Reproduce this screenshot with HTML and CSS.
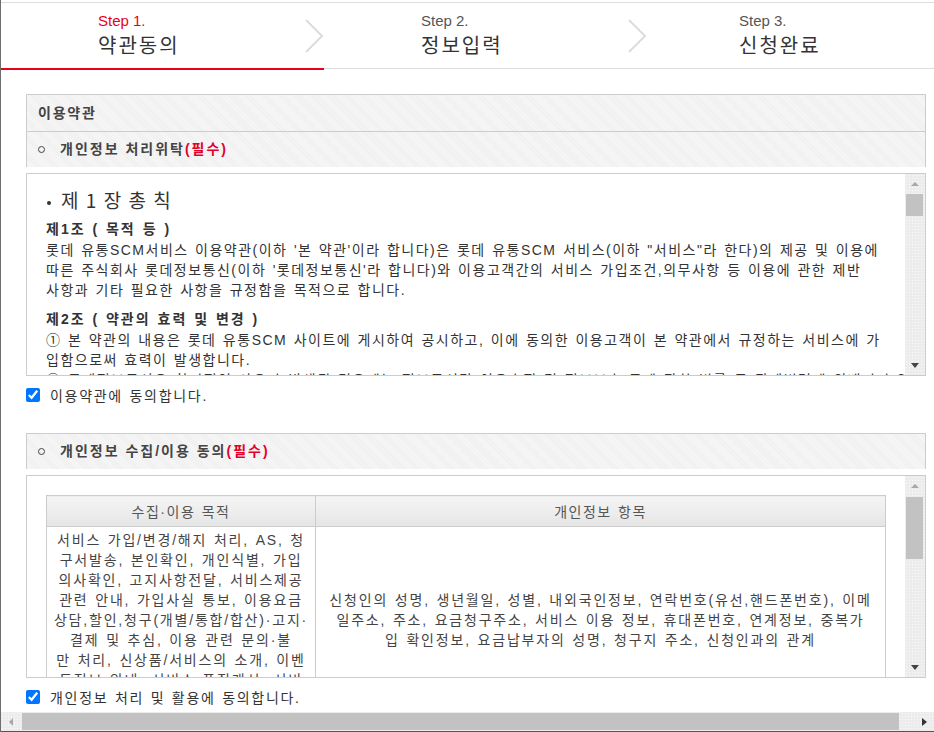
FILE: index.html
```html
<!DOCTYPE html>
<html lang="ko">
<head>
    <meta charset="UTF-8">
    <meta name="viewport" content="width=device-width, initial-scale=1.0">
    <title>약관동의</title>
    <link rel="stylesheet" href="styles.css">
</head>
<body>
    <div class="frame">
        <div class="page">
            <ul class="steps">
                <li class="step on">
                    <div class="step-text">
                        <span class="step-no">Step 1.</span>
                        <strong>약관동의</strong>
                    </div>
                    <svg class="step-arrow" width="18" height="34" viewBox="0 0 18 34"><polyline points="1,1 17,17 1,33" /></svg>
                </li>
                <li class="step">
                    <div class="step-text">
                        <span class="step-no">Step 2.</span>
                        <strong>정보입력</strong>
                    </div>
                    <svg class="step-arrow" width="18" height="34" viewBox="0 0 18 34"><polyline points="1,1 17,17 1,33" /></svg>
                </li>
                <li class="step">
                    <div class="step-text">
                        <span class="step-no">Step 3.</span>
                        <strong>신청완료</strong>
                    </div>
                </li>
            </ul>

            <div class="content">
                <div class="sec-head">
                    <h2 class="sec-title">이용약관</h2>
                    <h3 class="sec-sub"><span class="ring"></span>개인정보 처리위탁<em>(필수)</em></h3>
                </div>
                <div class="box">
                    <div class="box-body terms">
                        <h4 class="chapter"><span class="dot"></span>제 1 장 총 칙</h4>
                        <dl class="article">
                            <dt>제1조 ( 목적 등 )</dt>
                            <dd>롯데 유통SCM서비스 이용약관(이하 '본 약관'이라 합니다)은 롯데 유통SCM 서비스(이하 "서비스"라 한다)의 제공 및 이용에<br>따른 주식회사 롯데정보통신(이하 '롯데정보통신'라 합니다)와 이용고객간의 서비스 가입조건,의무사항 등 이용에 관한 제반<br>사항과 기타 필요한 사항을 규정함을 목적으로 합니다.</dd>
                        </dl>
                        <dl class="article">
                            <dt>제2조 ( 약관의 효력 및 변경 )</dt>
                            <dd>① 본 약관의 내용은 롯데 유통SCM 사이트에 게시하여 공시하고, 이에 동의한 이용고객이 본 약관에서 규정하는 서비스에 가<br>입함으로써 효력이 발생합니다.</dd>
                            <dd>② 롯데정보통신은 합리적인 사유가 발생될 경우에는 정보통신망 이용촉진 및 정보보호 등에 관한 법률 등 관계법령에 위배되지 않는</dd>
                        </dl>
                    </div>
                    <div class="vscroll">
                        <span class="sb-up"></span>
                        <span class="sb-thumb"></span>
                        <span class="sb-track"></span>
                        <span class="sb-down"></span>
                    </div>
                </div>
                <label class="agree"><input type="checkbox" checked>이용약관에 동의합니다.</label>

                <div class="sec-head sec-gap">
                    <h3 class="sec-sub"><span class="ring"></span>개인정보 수집/이용 동의<em>(필수)</em></h3>
                </div>
                <div class="box">
                    <div class="box-body consent">
                        <table class="info-table">
                            <colgroup>
                                <col class="col-purpose">
                                <col>
                            </colgroup>
                            <thead>
                                <tr>
                                    <th>수집·이용 목적</th>
                                    <th>개인정보 항목</th>
                                </tr>
                            </thead>
                            <tbody>
                                <tr>
                                    <td>서비스 가입/변경/해지 처리, AS, 청<br>구서발송, 본인확인, 개인식별, 가입<br>의사확인, 고지사항전달, 서비스제공<br>관련 안내, 가입사실 통보, 이용요금<br>상담,할인,청구(개별/통합/합산)·고지·<br>결제 및 추심, 이용 관련 문의·불<br>만 처리, 신상품/서비스의 소개, 이벤<br>트정보 안내, 서비스 품질개선, 서비<br>스 이용실적 분석 및 통계 활용</td>
                                    <td>신청인의 성명, 생년월일, 성별, 내외국인정보, 연락번호(유선,핸드폰번호), 이메<br>일주소, 주소, 요금청구주소, 서비스 이용 정보, 휴대폰번호, 연계정보, 중복가<br>입 확인정보, 요금납부자의 성명, 청구지 주소, 신청인과의 관계</td>
                                </tr>
                            </tbody>
                        </table>
                    </div>
                    <div class="vscroll">
                        <span class="sb-up"></span>
                        <span class="sb-thumb tall"></span>
                        <span class="sb-track"></span>
                        <span class="sb-down"></span>
                    </div>
                </div>
                <label class="agree"><input type="checkbox" checked>개인정보 처리 및 활용에 동의합니다.</label>
            </div>
        </div>

        <div class="hscroll">
            <span class="sb-left"></span>
            <span class="sb-thumb-h"></span>
            <span class="sb-track"></span>
            <span class="sb-right"></span>
        </div>
    </div>
</body>
</html>
```

FILE: styles.css
```css
* {
    margin: 0;
    padding: 0;
    box-sizing: border-box;
}

body {
    font-family: "Liberation Sans", "Noto Sans CJK KR", sans-serif;
    font-size: 14px;
    color: #333;
    background-color: #fff;
}

.frame {
    height: 732px;
    border-left: 1px solid #6e6e6e;
    display: flex;
    flex-direction: column;
    overflow: hidden;
}

.page {
    flex: 1;
    overflow: hidden;
    padding-top: 2px;
}

/* steps */
.steps {
    display: flex;
    width: 969px;
    list-style: none;
    border-top: 1px solid #ddd;
    border-bottom: 1px solid #ddd;
}

.step {
    width: 323px;
    height: 65px;
    display: flex;
    align-items: center;
    justify-content: space-between;
    padding-left: 97px;
}

.step:last-child {
    padding-left: 92px;
}

.step.on {
    box-shadow: 0 2px 0 #e8001c;
}

.step-text {
    display: flex;
    flex-direction: column;
}

.step-no {
    font-size: 15px;
    line-height: 18px;
    color: #555;
}

.step.on .step-no {
    color: #e8001c;
}

.step-text strong {
    font-family: "Noto Sans CJK KR", sans-serif;
    font-size: 20px;
    line-height: 30px;
    font-weight: normal;
    letter-spacing: 2px;
    color: #333;
}

.step-arrow {
    margin-right: 1px;
}

.step-arrow polyline {
    fill: none;
    stroke: #dcdcdc;
    stroke-width: 2;
}

/* sections */
.content {
    width: 900px;
    margin-left: 25px;
    padding-top: 25px;
}

.sec-head {
    border: 1px solid #ccc;
    border-bottom: none;
    background: repeating-linear-gradient(45deg, #f7f7f7 0 1px, #efefef 1px 2px);
}

.sec-gap {
    margin-top: 30px;
}

.sec-title {
    height: 37px;
    line-height: 36px;
    padding-left: 11px;
    border-bottom: 1px solid #ccc;
    font-size: 14px;
    letter-spacing: 1.8px;
    color: #444;
}

.sec-sub {
    height: 35px;
    line-height: 35px;
    padding-left: 11px;
    font-size: 14px;
    letter-spacing: 2px;
    color: #444;
}

.sec-sub em {
    font-style: normal;
    color: #e4002b;
}

.ring {
    display: inline-block;
    width: 7px;
    height: 7px;
    margin-right: 15px;
    border: 1.5px solid #444;
    border-radius: 50%;
    vertical-align: 1px;
}

.box {
    height: 203px;
    margin-top: 6px;
    border: 1px solid #ccc;
    display: flex;
}

.box-body {
    flex: 1;
    overflow: hidden;
    padding: 12px 19px 0;
    letter-spacing: 1.5px;
    word-spacing: 1px;
}

/* terms text */
.chapter {
    font-family: "Noto Sans CJK KR", sans-serif;
    font-size: 19px;
    line-height: 28px;
    font-weight: normal;
    letter-spacing: 0.5px;
    margin-bottom: 4px;
}

.dot {
    display: inline-block;
    width: 4px;
    height: 4px;
    margin: 0 10px 0 1px;
    border-radius: 50%;
    background-color: #333;
    vertical-align: middle;
}

.article {
    margin-bottom: 8px;
}

.article dt {
    font-weight: bold;
    line-height: 22px;
    letter-spacing: 2px;
}

.article dd {
    line-height: 20px;
    white-space: nowrap;
}

/* consent table */
.consent {
    padding-top: 19px;
}

.info-table {
    width: 100%;
    table-layout: fixed;
    border-collapse: collapse;
    border: 1px solid #ccc;
    color: #444;
    letter-spacing: 1.8px;
}

.col-purpose {
    width: 269px;
}

.info-table th {
    height: 31px;
    border: 1px solid #ccc;
    font-weight: normal;
    color: #555;
    letter-spacing: 1.5px;
    background: linear-gradient(#f5f5f5, #e5e5e5);
}

.info-table td {
    padding: 3px 0 5px;
    border: 1px solid #ccc;
    line-height: 20px;
    text-align: center;
    vertical-align: middle;
    white-space: nowrap;
}

/* fake scrollbars */
.vscroll {
    width: 20px;
    display: flex;
    flex-direction: column;
    background: #ececec radial-gradient(#fafafa 0.6px, transparent 1px) 0 0 / 3px 3px;
}

.sb-up,
.sb-down {
    height: 20px;
    display: flex;
    align-items: center;
    justify-content: center;
}

.sb-up::before {
    content: "";
    border: 4px solid transparent;
    border-top: none;
    border-bottom-color: #a8a8a8;
}

.sb-down::before {
    content: "";
    border: 4px solid transparent;
    border-bottom: none;
    border-top: 5px solid #444;
}

.sb-thumb {
    height: 22px;
    margin: 0 2px 0 1px;
    background-color: #c2c2c2;
}

.sb-thumb.tall {
    height: 62px;
    margin-top: 1px;
}

.sb-track {
    flex: 1;
}

.agree {
    display: flex;
    align-items: center;
    gap: 10px;
    height: 16px;
    margin-top: 11px;
    letter-spacing: 1.7px;
    word-spacing: 1px;
}

.agree input {
    width: 14px;
    height: 14px;
    margin: 0;
}

.hscroll {
    height: 20px;
    display: flex;
    border-bottom: 1px solid #555;
    background: #ececec radial-gradient(#fafafa 0.6px, transparent 1px) 0 0 / 3px 3px;
}

.sb-left,
.sb-right {
    width: 20px;
    display: flex;
    align-items: center;
    justify-content: center;
}

.sb-left::before {
    content: "";
    border: 4px solid transparent;
    border-left: none;
    border-right-color: #a8a8a8;
}

.sb-right::before {
    content: "";
    border: 4px solid transparent;
    border-right: none;
    border-left: 5px solid #333;
}

.sb-thumb-h {
    width: 877px;
    margin: 1px 0 1px 1px;
    background-color: #c2c2c2;
}
```
